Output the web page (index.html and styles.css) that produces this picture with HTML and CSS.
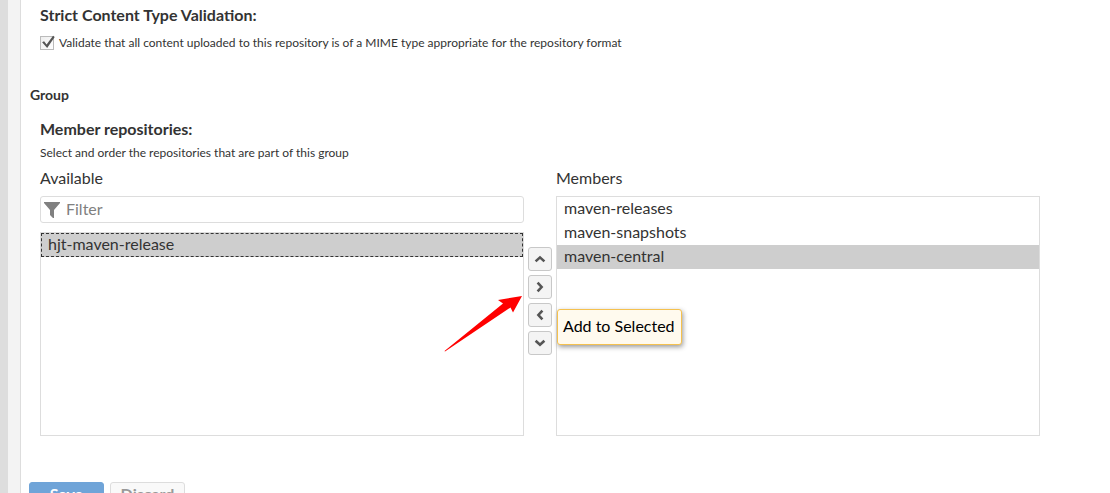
FILE: index.html
```html
<!DOCTYPE html>
<html lang="en">
<head>
<meta charset="utf-8">
<title>Repository settings</title>
<link rel="stylesheet" href="styles.css">
</head>
<body>
<div class="shell">
  <div class="rail"></div>
  <div class="gutter"></div>
  <main class="panel">
    <form class="form">
      <section class="field">
        <h3 class="field-title">Strict Content Type Validation:</h3>
        <label class="check"><input class="check-box" type="checkbox" checked><span>Validate that all content uploaded to this repository is of a MIME type appropriate for the repository format</span></label>
      </section>

      <h2 class="group-title">Group</h2>

      <section class="field">
        <h3 class="field-title">Member repositories:</h3>
        <p class="help">Select and order the repositories that are part of this group</p>
        <div class="selector">
          <div class="column">
            <label class="column-label" for="filter">Available</label>
            <div class="filter">
              <svg class="funnel" viewBox="0 0 16 16" aria-hidden="true"><path d="M0 0H16V1L10 8V16H9L6 13V8L0 1Z"/></svg>
              <input class="filter-input" id="filter" type="text" placeholder="Filter">
            </div>
            <ul class="list" role="listbox" aria-label="Available" tabindex="0">
              <li class="option option-selected option-focus" role="option" aria-selected="true">hjt-maven-release</li>
            </ul>
          </div>
          <div class="moves">
            <button class="move" type="button" aria-label="Move up"><svg class="chevron" viewBox="0 0 12 12"><path d="M1.6 8.4L6 4.4L10.4 8.4"/></svg></button>
            <button class="move" type="button" aria-label="Add to Selected"><svg class="chevron" viewBox="0 0 12 12"><path d="M3.6 1.6L7.6 6L3.6 10.4"/></svg></button>
            <button class="move" type="button" aria-label="Remove from Selected"><svg class="chevron" viewBox="0 0 12 12"><path d="M8.4 1.6L4.4 6L8.4 10.4"/></svg></button>
            <button class="move" type="button" aria-label="Move down"><svg class="chevron" viewBox="0 0 12 12"><path d="M1.6 3.8L6 7.8L10.4 3.8"/></svg></button>
            <div class="tooltip" role="tooltip">Add to Selected</div>
            <svg class="pointer" viewBox="0 0 80 58" aria-hidden="true"><path d="M0.5 55L59 7.5L54 4L78 0L69 16.5L66.5 11.5L1 55.5Z"/></svg>
          </div>
          <div class="column">
            <span class="column-label">Members</span>
            <ul class="list" role="listbox" aria-label="Members" tabindex="0">
              <li class="option" role="option" aria-selected="false">maven-releases</li>
              <li class="option" role="option" aria-selected="false">maven-snapshots</li>
              <li class="option option-selected" role="option" aria-selected="true">maven-central</li>
            </ul>
          </div>
        </div>
      </section>

      <div class="actions">
        <button class="button button-primary" type="button">Save</button>
        <button class="button" type="button">Discard</button>
      </div>
    </form>
  </main>
</div>
</body>
</html>
```
FILE: styles.css
```css
* { box-sizing: border-box; }

body {
  margin: 0;
  height: 100vh;
  overflow: hidden;
  background: #fff;
  color: #333;
  font-family: "Lato", "Liberation Sans", sans-serif;
  font-size: 16px;
  line-height: 20px;
}

h2, h3, p, ul { margin: 0; padding: 0; }

.shell { display: flex; min-height: 100vh; }
.rail { flex: none; width: 8px; background: #ddd; }
.gutter { flex: none; width: 13px; background: #f3f3f3; border-right: 1px solid #ddd; }
.panel { flex: 1; min-width: 0; }
.form { padding: 5px 70px 0 9px; }
.field { padding-left: 10px; }
.field-title { font-size: 16px; font-weight: 700; }

.check {
  display: flex;
  align-items: center;
  gap: 5px;
  margin-top: 10px;
  font-size: 12px;
  line-height: 16px;
}
.check-box {
  appearance: none;
  flex: none;
  width: 14px;
  height: 14px;
  margin: 0;
  border: 1px solid #bbb;
  background: linear-gradient(135deg, #eee, #fff);
  position: relative;
}
.check-box:checked::after {
  content: "";
  position: absolute;
  inset: -2px -2px 0 0;
  background: #555;
  clip-path: polygon(8% 52%, 22% 44%, 40% 68%, 86% 6%, 98% 14%, 44% 92%);
}

.group-title { margin: 34px 0 14px; font-size: 14px; font-weight: 700; }
.help { margin-top: 6px; font-size: 12px; line-height: 16px; }

.selector {
  display: grid;
  grid-template-columns: 1fr 32px 1fr;
  height: 268px;
  margin-top: 7px;
}
.column { display: flex; flex-direction: column; min-width: 0; }
.column-label { margin-bottom: 8px; }

.filter {
  display: flex;
  align-items: center;
  gap: 6px;
  height: 27px;
  margin-bottom: 9px;
  padding: 0 3px;
  border: 1px solid #ddd;
  border-radius: 3px;
}
.funnel { flex: none; width: 16px; height: 16px; fill: #808080; }
.filter-input {
  flex: 1;
  min-width: 0;
  padding: 0 0 2px;
  border: 0;
  outline: 0;
  background: none;
  color: #333;
  font: inherit;
}
.filter-input::placeholder { color: #808080; opacity: 1; }

.list { flex: 1; border: 1px solid #ddd; list-style: none; }
.option { padding: 1px 7px 3px; }
.option-selected { background: #cecece; }
.option-focus { outline: 1px dashed #333; outline-offset: -1px; }

.moves {
  position: relative;
  display: flex;
  flex-direction: column;
  align-items: center;
  gap: 4px;
  padding-top: 79px;
}
.move {
  display: flex;
  align-items: center;
  justify-content: center;
  width: 24px;
  height: 24px;
  padding: 0;
  border: 1px solid #c8c8c8;
  border-radius: 3px;
  background: #f4f4f4;
}
.chevron { width: 12px; height: 12px; fill: none; stroke: #555; stroke-width: 2.6; }

.tooltip {
  position: absolute;
  z-index: 1;
  top: 141px;
  left: 33px;
  padding: 6px 6px 8px 5px;
  border: 1px solid #f5c14e;
  border-radius: 3px;
  background: #fffaee;
  box-shadow: 1px 2px 5px #999;
  color: #000;
  white-space: nowrap;
}
.pointer {
  position: absolute;
  top: 128px;
  left: -80px;
  width: 80px;
  height: 58px;
  fill: #f00;
  pointer-events: none;
}

.actions { display: flex; gap: 6px; margin: 46px 0 0 -1px; }
.button {
  width: 75px;
  height: 24px;
  padding: 0;
  border: 1px solid #ddd;
  border-radius: 3px;
  background: #f9f9f9;
  color: #999;
  font: 700 16px/20px "Lato", "Liberation Sans", sans-serif;
}
.button-primary { border-color: #6fa4d8; background: #6fa4d8; color: #fff; }
```
